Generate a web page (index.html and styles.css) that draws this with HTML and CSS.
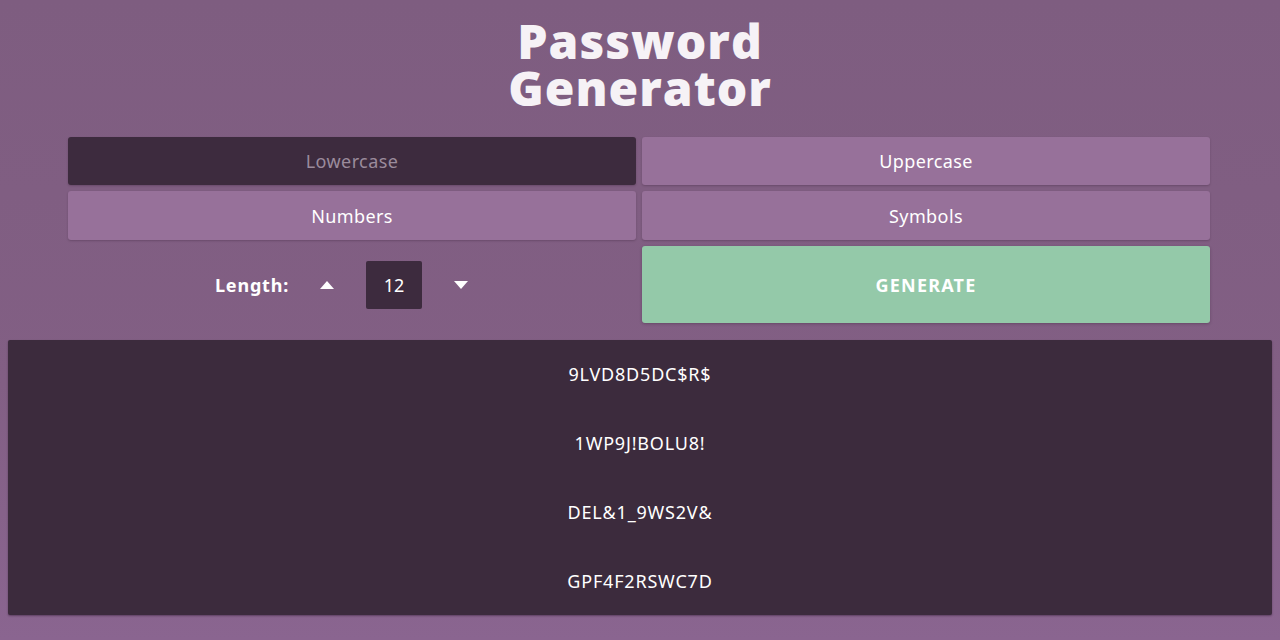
FILE: index.html
```html
<!DOCTYPE html>
<html lang="en">
<head>
<meta charset="utf-8">
<title>Password Generator</title>
<link rel="stylesheet" href="styles.css">
</head>
<body>
<main class="app">
  <h1 class="title"><span class="title-line">Password</span><span class="title-line">Generator</span></h1>
  <section class="controls">
    <button class="opt active">Lowercase</button>
    <button class="opt">Uppercase</button>
    <button class="opt">Numbers</button>
    <button class="opt">Symbols</button>
    <div class="length">
      <span class="length-label">Length:</span>
      <button class="arrow up" aria-label="increase"><svg width="16" height="10" viewBox="0 0 16 10"><path d="M8 1 L15 9 L1 9 Z" fill="#fff"/></svg></button>
      <span class="length-value">12</span>
      <button class="arrow down" aria-label="decrease"><svg width="16" height="10" viewBox="0 0 16 10"><path d="M1 1 L15 1 L8 9 Z" fill="#fff"/></svg></button>
    </div>
    <button class="generate">GENERATE</button>
  </section>
  <section class="output">
    <p class="pw">9LVD8D5DC$R$</p>
    <p class="pw">1WP9J!BOLU8!</p>
    <p class="pw">DEL&amp;1_9WS2V&amp;</p>
    <p class="pw">GPF4F2RSWC7D</p>
  </section>
</main>
</body>
</html>
```

FILE: styles.css
```css
html, body {
  margin: 0;
  height: 100%;
}
body {
  background: linear-gradient(180deg, #7e5d80 0%, #825f84 60%, #8a6590 100%);
  font-family: "Noto Sans", "Open Sans", sans-serif;
  color: #fff;
  padding: 0 8px;
  box-sizing: border-box;
}
.app {
  display: flex;
  flex-direction: column;
  align-items: center;
}
.title {
  margin: 17px 0 0;
  font-family: "Open Sans", sans-serif;
  font-weight: 800;
  font-size: 48px;
  line-height: 47px;
  letter-spacing: 1px;
  text-align: center;
  color: #f6f2f6;
}
.title-line {
  display: block;
}
.controls {
  margin-top: 26px;
  margin-right: 2px;
  width: 1142px;
  display: grid;
  grid-template-columns: 1fr 1fr;
  grid-template-rows: 48px 49px 77px;
  gap: 6px;
}
.opt {
  border: none;
  border-radius: 3px;
  background: #97719a;
  color: #fff;
  font-family: inherit;
  font-size: 18px;
  letter-spacing: 0.4px;
  box-shadow: 0 1px 2px rgba(40, 20, 40, 0.25);
  padding: 0;
}
.opt.active {
  background: #3d2b3e;
  color: #9b8b9c;
}
.length {
  display: flex;
  align-items: center;
  justify-content: center;
  padding-right: 18px;
}
.length-label {
  font-weight: 700;
  font-size: 18px;
  letter-spacing: 0.8px;
  margin-right: 28px;
}
.arrow {
  background: none;
  border: none;
  padding: 0;
  width: 20px;
  height: 20px;
  display: flex;
  align-items: center;
  justify-content: center;
}
.length-value {
  width: 56px;
  height: 48px;
  margin: 0 29px;
  background: #3d2b3e;
  border-radius: 2px;
  display: flex;
  align-items: center;
  justify-content: center;
  font-size: 18px;
}
.generate {
  border: none;
  border-radius: 3px;
  background: #94c9a9;
  color: #fff;
  font-family: inherit;
  font-weight: 700;
  font-size: 18px;
  letter-spacing: 1.2px;
  box-shadow: 0 1px 3px rgba(40, 20, 40, 0.3);
}
.output {
  margin-top: 17px;
  width: 100%;
  height: 275px;
  background: #3c2b3d;
  border-radius: 2px;
  box-shadow: 0 1px 2px rgba(30, 10, 30, 0.4);
  display: grid;
  grid-template-rows: repeat(4, 1fr);
}
.pw {
  margin: 0;
  display: flex;
  align-items: center;
  justify-content: center;
  font-size: 18px;
  letter-spacing: 0.8px;
}
```
